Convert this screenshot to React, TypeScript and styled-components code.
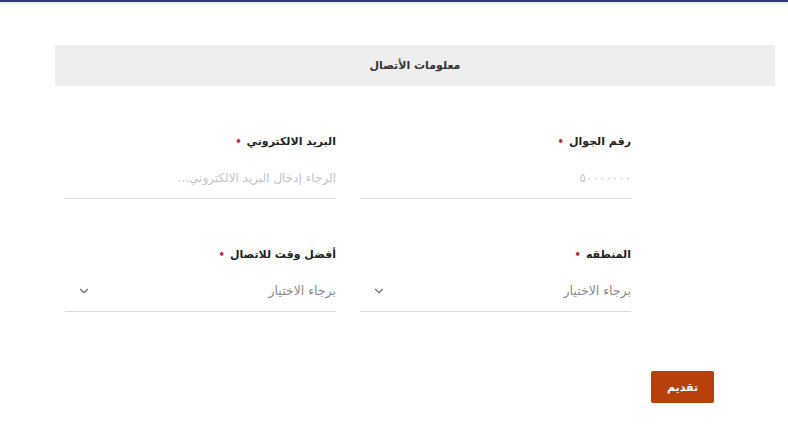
import React from "react";
import styled, { createGlobalStyle } from "styled-components";
import { ChevronDown } from "lucide-react";

const Global = createGlobalStyle`
  html, body { margin: 0; padding: 0; background: #ffffff; }
  body { font-family: "DejaVu Sans", sans-serif; direction: rtl; }
  * { box-sizing: border-box; }
`;

const TopBar = styled.div`
  height: 4px;
  background: #2f3679;
  border-bottom: 2px solid #e9eaf2;
`;

const Page = styled.main`
  padding: 41px 13px 0 55px;
`;

const SectionHeader = styled.div`
  height: 41px;
  background: #eeeeee;
  display: flex;
  align-items: center;
  justify-content: center;
  font-size: 11px;
  font-weight: bold;
  color: #333333;
`;

const Grid = styled.div`
  display: grid;
  grid-template-columns: 271px 271px;
  column-gap: 24px;
  row-gap: 45px;
  justify-content: start;
  padding-right: 144px;
  margin-top: 45px;
`;

const Field = styled.div`
  display: flex;
  flex-direction: column;
`;

const Label = styled.label`
  font-size: 11px;
  font-weight: bold;
  color: #222222;
  height: 20px;
  display: flex;
  align-items: center;
  gap: 5px;
`;

const Req = styled.span`
  color: #c0283a;
  font-size: 10px;
`;

const InputLine = styled.div`
  height: 48px;
  border-bottom: 1px solid #dcdcdc;
  display: flex;
  align-items: center;
  justify-content: space-between;
  padding: 6px 0 0 12px;
`;

const Placeholder = styled.span<{ $tone?: "light" | "mid" }>`
  font-size: ${(p) => (p.$tone === "mid" ? "12.5px" : "12px")};
  color: ${(p) => (p.$tone === "mid" ? "#8a8a8a" : "#c4c4c4")};
`;

const Chevron = styled(ChevronDown)`
  color: #6f6f6f;
`;

const Actions = styled.div`
  display: flex;
  justify-content: flex-start;
  padding-right: 61px;
  margin-top: 59px;
`;

const Submit = styled.button`
  width: 63px;
  height: 32px;
  background: #b8400b;
  color: #ffffff;
  border: none;
  border-radius: 2px;
  font-family: "DejaVu Sans", sans-serif;
  font-size: 11px;
  font-weight: bold;
`;

export default function App() {
  return (
    <>
      <Global />
      <TopBar />
      <Page>
        <SectionHeader>معلومات الأتصال</SectionHeader>
        <Grid>
          <Field>
            <Label>
              رقم الجوال <Req>•</Req>
            </Label>
            <InputLine>
              <Placeholder>
                <bdi>٥٠٠٠٠٠٠٠</bdi>
              </Placeholder>
            </InputLine>
          </Field>
          <Field>
            <Label>
              البريد الالكتروني <Req>•</Req>
            </Label>
            <InputLine>
              <Placeholder>الرجاء إدخال البريد الالكتروني...</Placeholder>
            </InputLine>
          </Field>
          <Field>
            <Label>
              المنطقه <Req>•</Req>
            </Label>
            <InputLine>
              <Placeholder $tone="mid">برجاء الاختيار</Placeholder>
              <Chevron size={14} strokeWidth={2} />
            </InputLine>
          </Field>
          <Field>
            <Label>
              أفضل وقت للاتصال <Req>•</Req>
            </Label>
            <InputLine>
              <Placeholder $tone="mid">برجاء الاختيار</Placeholder>
              <Chevron size={14} strokeWidth={2} />
            </InputLine>
          </Field>
        </Grid>
        <Actions>
          <Submit>تقديم</Submit>
        </Actions>
      </Page>
    </>
  );
}
